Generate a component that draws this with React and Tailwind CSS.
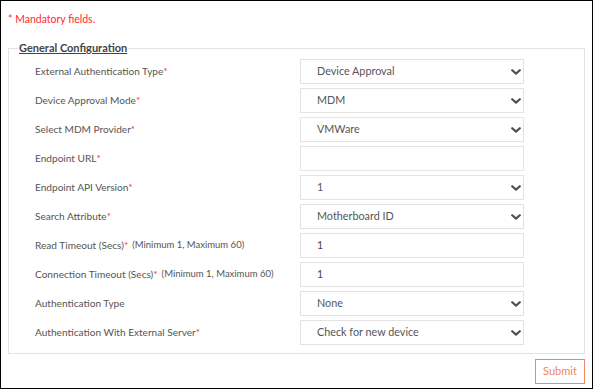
const ROWS = [
  { label: 'External Authentication Type', req: true, type: 'select', value: 'Device Approval' },
  { label: 'Device Approval Mode', req: true, type: 'select', value: 'MDM' },
  { label: 'Select MDM Provider', req: true, type: 'select', value: 'VMWare' },
  { label: 'Endpoint URL', req: true, type: 'input', value: '' },
  { label: 'Endpoint API Version', req: true, type: 'select', value: '1' },
  { label: 'Search Attribute', req: true, type: 'select', value: 'Motherboard ID' },
  { label: 'Read Timeout (Secs)', req: true, hint: '(Minimum 1, Maximum 60)', type: 'input', value: '1' },
  { label: 'Connection Timeout (Secs)', req: true, hint: '(Minimum 1, Maximum 60)', type: 'input', value: '1' },
  { label: 'Authentication Type', req: false, type: 'select', value: 'None' },
  { label: 'Authentication With External Server', req: true, type: 'select', value: 'Check for new device' },
]

function Chevron() {
  return (
    <svg width="10" height="6" viewBox="0 0 10 6" className="text-[#574f4f]">
      <polyline points="1.2,1.2 5,4.6 8.8,1.2" fill="none" stroke="currentColor" strokeWidth="2.2" strokeLinecap="round" strokeLinejoin="round" />
    </svg>
  )
}

function Field({ row }) {
  if (row.type === 'select') {
    return (
      <div className="flex h-[25px] items-center justify-between border border-[#e3e3e3] bg-white pl-4 pr-[2px] text-[10.8px] text-[#555]">
        <span>{row.value}</span>
        <Chevron />
      </div>
    )
  }
  return (
    <div className="flex h-[25px] items-center border border-[#e3e3e3] bg-white pl-4 text-[10.5px] text-[#444]">
      {row.value}
    </div>
  )
}

export default function App() {
  return (
    <div
      className="h-[390px] w-[594px] bg-white"
      style={{ fontFamily: 'Lato, "Open Sans", sans-serif' }}
    >
      <div className="flex h-[389px] w-[593px] flex-col border border-black px-[7px] pt-[11px]">
        <div className="text-[10.5px] leading-[14px] text-[#ff2a2a]">* Mandatory fields.</div>

        <fieldset className="mt-[16px] border border-[#e3e3e3] pb-[8px] pt-[5px]">
          <legend className="ml-[9px] px-[1px] text-[11px] font-bold leading-[12px] text-[#444] underline">
            General Configuration
          </legend>
          <div className="grid grid-cols-[265px_224px] gap-y-1 pl-[26px]">
            {ROWS.map((row) => (
              <div key={row.label} className="contents">
                <div className="flex h-[25px] items-center text-[10.1px] text-[#555]">
                  <span>{row.label}</span>
                  {row.req && <span className="text-[#ff2a2a]">*</span>}
                  {row.hint && <span className="ml-1 text-[9.5px] text-[#555]">{row.hint}</span>}
                </div>
                <Field row={row} />
              </div>
            ))}
          </div>
        </fieldset>

        <div className="mt-[5px] flex justify-end">
          <button className="flex h-[25px] w-[50px] items-center justify-center border border-[#f0855e] bg-white text-[11px] text-[#f0855e]">
            Submit
          </button>
        </div>
      </div>
    </div>
  )
}
